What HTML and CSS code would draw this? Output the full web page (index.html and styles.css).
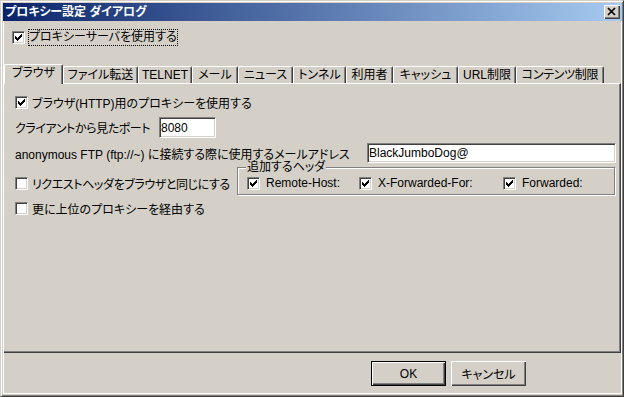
FILE: index.html
```html
<!DOCTYPE html>
<html lang="ja">
<head>
    <meta charset="UTF-8">
    <title>プロキシー設定 ダイアログ</title>
    <link rel="stylesheet" href="styles.css">
</head>
<body>
    <div class="window">
        <div class="titlebar">
            <span class="title">プロキシー設定 ダイアログ</span>
            <span class="close-btn">
                <svg width="14" height="12" viewBox="0 0 14 12"><path d="M3 2l7 7M10 2l-7 7" stroke="#000" stroke-width="1.7"/></svg>
            </span>
        </div>

        <div class="client">
            <div class="top">
                <label class="check-row">
                    <span class="check"><svg width="11" height="11" viewBox="1 1 11 11"><path d="M3 5h1v1h1v1h1v-1h1v-1h1v-1h1v-1h1v3h-1v1h-1v1h-1v1h-1v1h-1v-1h-1v-1h-1z" fill="#000"/></svg></span>
                    <span class="focus">プロキシーサーバを使用する</span>
                </label>
            </div>

            <div class="tabs">
                <div class="tab active">ブラウザ</div>
                <div class="tab">ファイル転送</div>
                <div class="tab">TELNET</div>
                <div class="tab">メール</div>
                <div class="tab">ニュース</div>
                <div class="tab">トンネル</div>
                <div class="tab">利用者</div>
                <div class="tab">キャッシュ</div>
                <div class="tab">URL制限</div>
                <div class="tab">コンテンツ制限</div>
            </div>

            <div class="panel">
                <label class="check-row row1">
                    <span class="check"><svg width="11" height="11" viewBox="1 1 11 11"><path d="M3 5h1v1h1v1h1v-1h1v-1h1v-1h1v-1h1v3h-1v1h-1v1h-1v1h-1v1h-1v-1h-1v-1h-1z" fill="#000"/></svg></span>
                    <span>ブラウザ(HTTP)用のプロキシーを使用する</span>
                </label>

                <div class="field-row port-row">
                    <span class="port-label">クライアントから見たポート</span>
                    <input class="input port" type="text" value="8080">
                </div>

                <div class="field-row mail-row">
                    <span>anonymous FTP (ftp://~) に接続する際に使用するメールアドレス</span>
                    <input class="input mail" type="text" value="BlackJumboDog@">
                </div>

                <div class="header-row">
                    <label class="check-row same-check">
                        <span class="check"></span>
                        <span class="tight">リクエストヘッダをブラウザと同じにする</span>
                    </label>
                    <fieldset class="group">
                        <legend>追加するヘッダ</legend>
                        <div class="group-items">
                            <label class="check-row">
                                <span class="check"><svg width="11" height="11" viewBox="1 1 11 11"><path d="M3 5h1v1h1v1h1v-1h1v-1h1v-1h1v-1h1v3h-1v1h-1v1h-1v1h-1v1h-1v-1h-1v-1h-1z" fill="#000"/></svg></span>
                                <span>Remote-Host:</span>
                            </label>
                            <label class="check-row">
                                <span class="check"><svg width="11" height="11" viewBox="1 1 11 11"><path d="M3 5h1v1h1v1h1v-1h1v-1h1v-1h1v-1h1v3h-1v1h-1v1h-1v1h-1v1h-1v-1h-1v-1h-1z" fill="#000"/></svg></span>
                                <span>X-Forwarded-For:</span>
                            </label>
                            <label class="check-row">
                                <span class="check"><svg width="11" height="11" viewBox="1 1 11 11"><path d="M3 5h1v1h1v1h1v-1h1v-1h1v-1h1v-1h1v3h-1v1h-1v1h-1v1h-1v1h-1v-1h-1v-1h-1z" fill="#000"/></svg></span>
                                <span>Forwarded:</span>
                            </label>
                        </div>
                    </fieldset>
                </div>

                <label class="check-row row5">
                    <span class="check"></span>
                    <span>更に上位のプロキシーを経由する</span>
                </label>
            </div>

            <div class="footer">
                <button class="btn default">OK</button>
                <button class="btn">キャンセル</button>
            </div>
        </div>
    </div>
</body>
</html>
```

FILE: styles.css
```css
* {
    box-sizing: border-box;
}

body {
    margin: 0;
    background-color: #d4d0c8;
    color: #000;
    font-family: "Liberation Sans", "Noto Sans CJK JP", sans-serif;
    font-size: 12px;
    font-feature-settings: "palt";
}

/* window frame */
.window {
    width: 624px;
    height: 397px;
    display: flex;
    flex-direction: column;
    background-color: #d4d0c8;
    border: 1px solid;
    border-color: #d4d0c8 #404040 #404040 #d4d0c8;
    box-shadow: inset 1px 1px #fff, inset -1px -1px #808080;
    padding: 2px 1px 2px 2px;
}

.titlebar {
    height: 18px;
    flex: none;
    display: flex;
    align-items: center;
    justify-content: space-between;
    padding: 0 2px 0 2px;
    background: linear-gradient(to right, #0a246a, #a6caf0);
    color: #fff;
    font-weight: bold;
    line-height: 18px;
}

.close-btn {
    width: 16px;
    height: 14px;
    display: flex;
    align-items: center;
    justify-content: center;
    background-color: #d4d0c8;
    box-shadow: inset 1px 1px #fff, inset -1px -1px #404040, inset -2px -2px #808080;
}

.client {
    flex: 1;
    display: flex;
    flex-direction: column;
    border: solid #fff;
    border-width: 0 1px 1px 1px;
}

.top {
    height: 43px;
    flex: none;
    padding: 8px 0 0 8px;
}

/* checkboxes */
.check-row {
    display: flex;
    align-items: center;
    height: 16px;
    white-space: nowrap;
}

.check {
    width: 13px;
    height: 13px;
    flex: none;
    margin-right: 4px;
    background-color: #fff;
    border: 1px solid;
    border-color: #808080 #fff #fff #808080;
    box-shadow: inset 1px 1px #404040, inset -1px -1px #d4d0c8;
}

.check svg {
    display: block;
}

.top .check-row {
    height: 17px;
}

.top .check {
    margin-right: 3px;
}

.focus {
    outline: 1px dotted #000;
    outline-offset: -1px;
    padding: 0 1px;
    line-height: 17px;
}

.tight {
    letter-spacing: -0.4px;
}

/* tabs */
.tabs {
    height: 19px;
    flex: none;
    display: flex;
    align-items: flex-end;
}

.tab {
    height: 17px;
    flex: none;
    display: flex;
    justify-content: center;
    border: 1px solid;
    border-color: #fff #404040 transparent #fff;
    border-bottom: 0;
    border-radius: 2px 2px 0 0;
    box-shadow: inset -1px 0 #808080;
    line-height: 16px;
    white-space: nowrap;
}

.tab:nth-child(1) { width: 59px; }
.tab:nth-child(2) { width: 75px; }
.tab:nth-child(3) { width: 54px; }
.tab:nth-child(4) { width: 46px; }
.tab:nth-child(5) { width: 55px; }
.tab:nth-child(6) { width: 53px; }
.tab:nth-child(7) { width: 47px; }
.tab:nth-child(8) { width: 65px; }
.tab:nth-child(9) { width: 58px; }
.tab:nth-child(10) { width: 88px; letter-spacing: -0.3px; }

.tab.active {
    height: 20px;
    margin-bottom: -1px;
    position: relative;
    z-index: 1;
    background-color: #d4d0c8;
    line-height: 17px;
}

.panel {
    height: 270px;
    flex: none;
    display: flex;
    flex-direction: column;
    padding: 10px 4px 0 11px;
    border-top: 1px solid #fff;
    border-right: 1px solid #404040;
    border-bottom: 1px solid #404040;
    box-shadow: inset -1px -1px #808080;
}

.field-row {
    display: flex;
    align-items: center;
    white-space: nowrap;
}

.port-row {
    height: 21px;
    margin-top: 7px;
}

.port-label {
    width: 144px;
    letter-spacing: -0.4px;
}

.mail-row {
    height: 20px;
    margin-top: 5px;
}

.input {
    height: 100%;
    padding: 0;
    font: inherit;
    color: #000;
    background-color: #fff;
    border: 1px solid;
    border-color: #808080 #fff #fff #808080;
    box-shadow: inset 1px 1px #404040, inset -1px -1px #d4d0c8;
    outline: none;
}

.port {
    width: 57px;
    padding-left: 1px;
}

.mail {
    width: 249px;
    margin-left: auto;
    padding-left: 1px;
}

.header-row {
    display: flex;
    align-items: flex-start;
    margin-top: -2px;
}

.same-check {
    margin-top: 14px;
}

.group {
    width: 378px;
    flex: none;
    margin: 0 1px 0 auto;
    padding: 2px 0 4px 9px;
    min-width: 0;
    border: 1px solid #808080;
    box-shadow: inset 1px 1px #fff, 1px 1px #fff;
}

.group legend {
    padding: 0 1px;
    margin-left: -1px;
    line-height: 13px;
    background-color: #d4d0c8;
}

.group-items {
    display: grid;
    grid-template-columns: 112px 144px auto;
}

.group-items .check-row {
    height: 14px;
}

.group-items .check {
    margin-right: 6px;
}

.row5 {
    margin-top: 5px;
}

/* buttons */
.footer {
    flex: 1;
    display: flex;
    justify-content: flex-end;
    align-items: flex-start;
    gap: 5px;
    padding: 8px 95px 0 0;
}

.btn {
    width: 75px;
    height: 25px;
    padding: 0;
    font: inherit;
    color: #000;
    background-color: #d4d0c8;
    border: 0;
    box-shadow: inset 1px 1px #fff, inset -1px -1px #404040, inset -2px -2px #808080;
}

.btn.default {
    border: 1px solid #000;
}
```
